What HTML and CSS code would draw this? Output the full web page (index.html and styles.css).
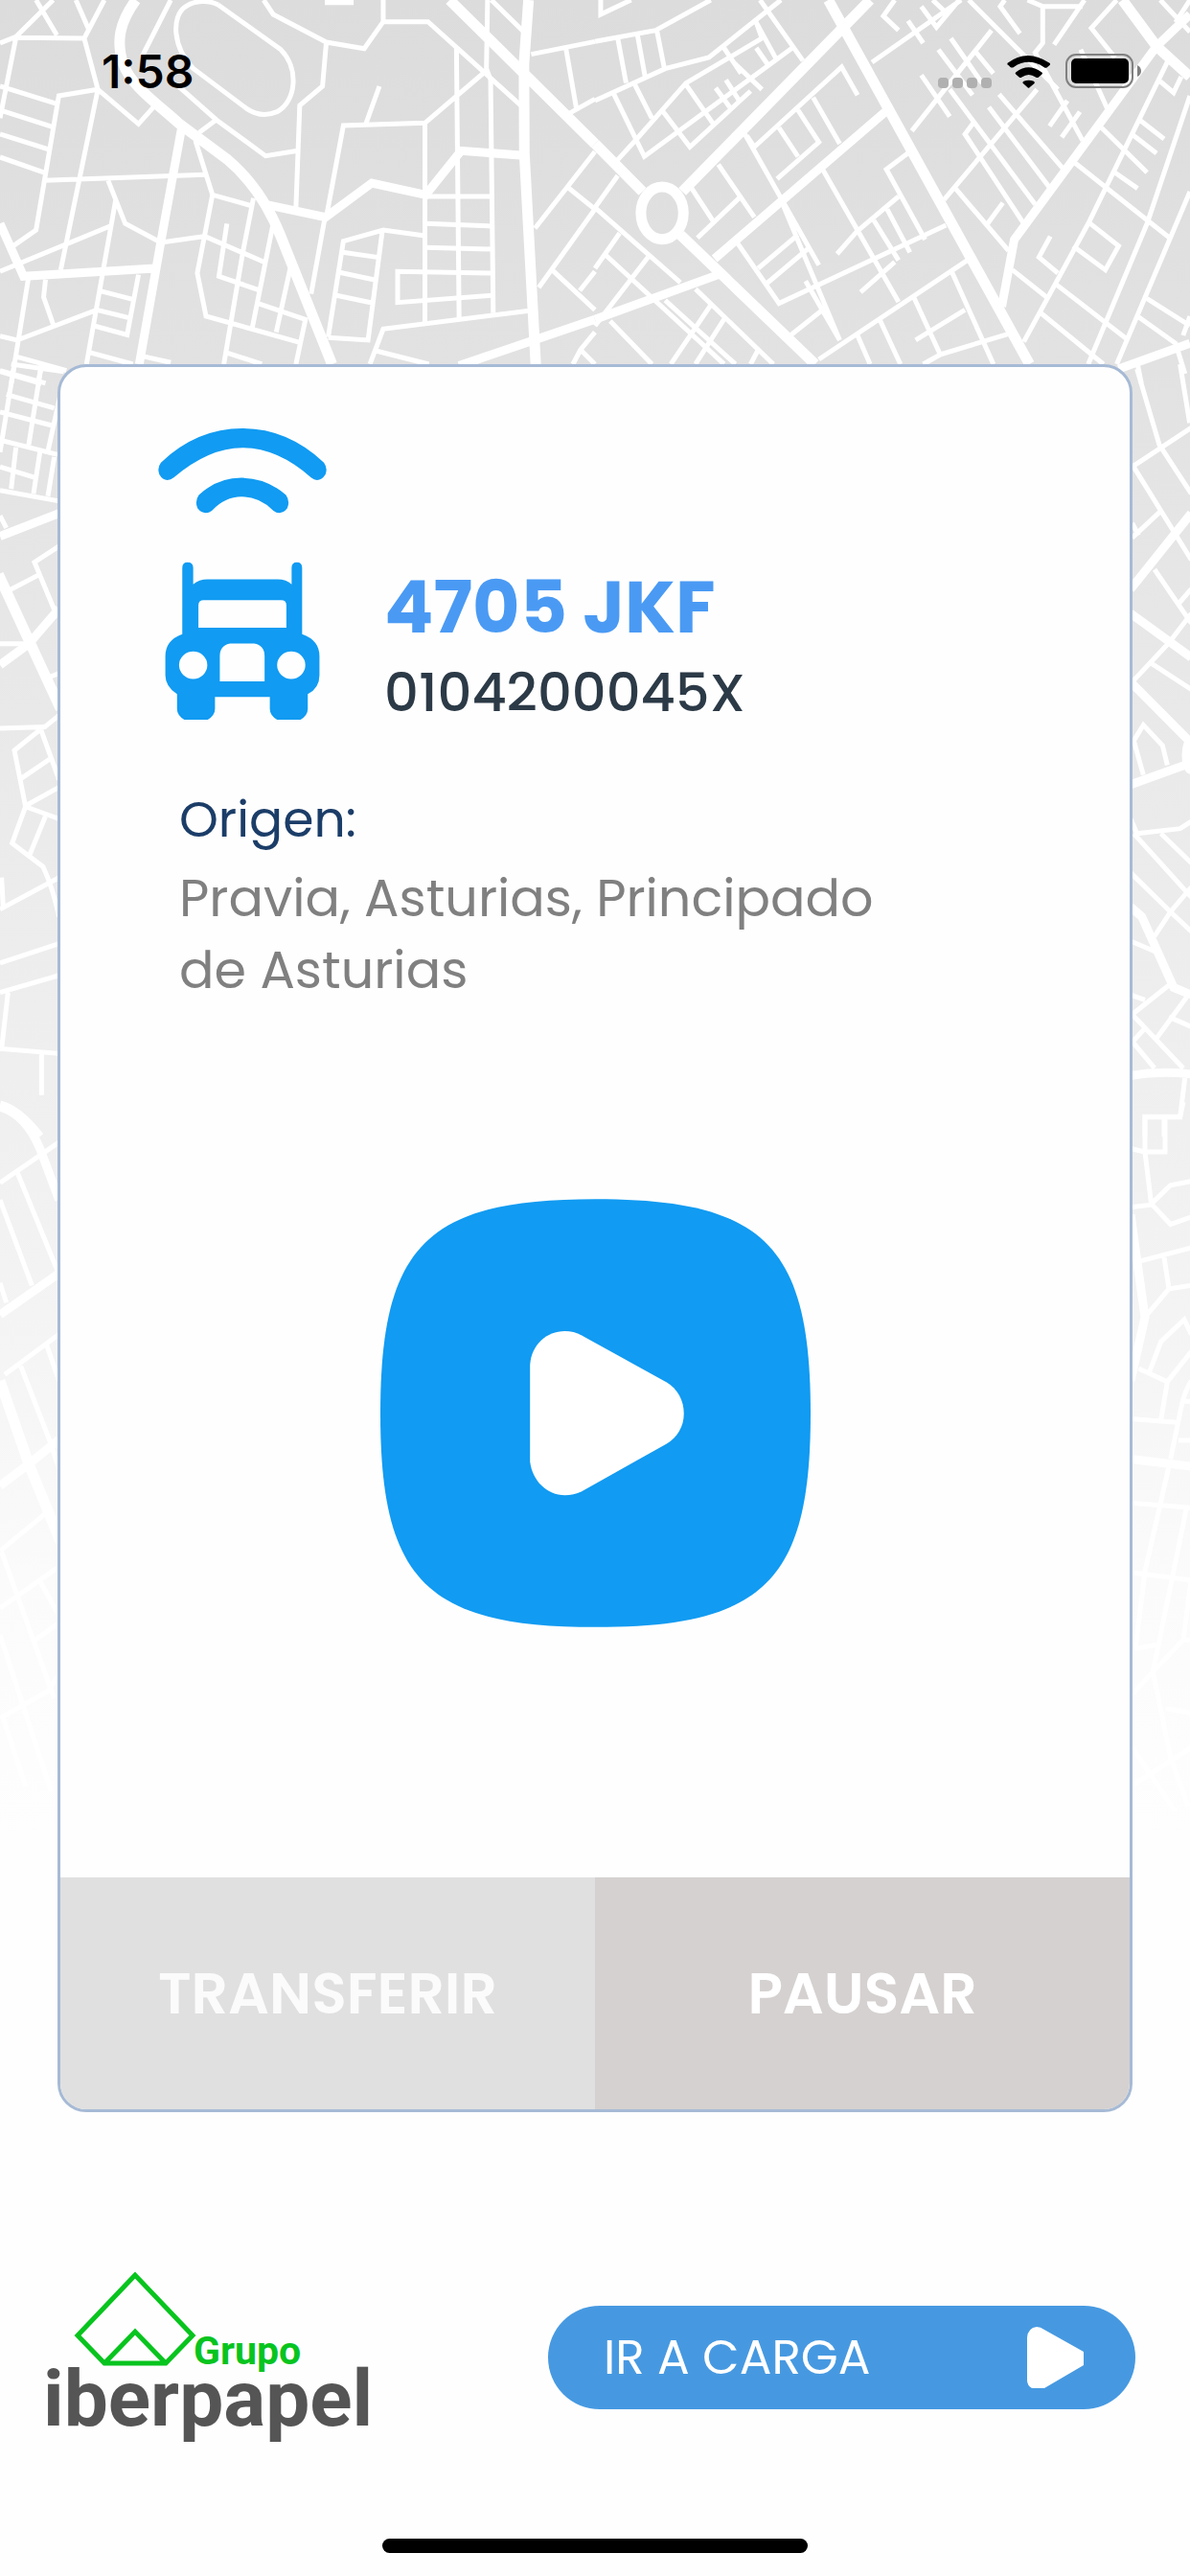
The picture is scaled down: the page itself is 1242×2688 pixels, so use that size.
FILE: index.html
```html
<!DOCTYPE html>
<html lang="es">
<head>
    <meta charset="UTF-8">
    <meta name="viewport" content="width=device-width, initial-scale=1">
    <title>Iberpapel</title>
    <link rel="stylesheet" href="styles.css">
</head>
<body>
    <!-- Street map behind the card -->
    <svg class="map" viewBox="0 0 1242 2000" preserveAspectRatio="xMidYMin slice" aria-hidden="true">
        <g transform="scale(.396 .3333)">
            <path class="road-main" d="M358 0C315 70 305 130 325 200C345 270 420 330 470 385L600 500C680 580 720 680 740 740L875 1140M1185 0L1568 450M1393 0L1381 200L1382 480L1412 1140"/>
            <path class="road-mid" d="M0 700L62 865L408 840M478 405L425 750L367 1140M700 640L858 680L980 573L1122 610L1215 472L1380 487M1210 1145L1568 1000M856 2H932"/>
            <path class="road" d="M95 0L150 110M140 0L42 115L0 135M200 0L233 90M275 0L222 120L45 118M42 118L0 370M222 120L258 280L365 388L405 335M258 280L155 300L95 720L35 770M0 270L150 325M0 345L140 398M0 420L128 468M0 492L115 540M258 280L160 845M118 565L540 547M450 0L375 175M470 270L570 375L700 488L785 472M570 375L525 415"/>
            <path class="road" d="M575 15L740 155C790 215 780 320 730 350C700 365 675 360 650 340L510 215C455 150 450 50 490 20C515 0 550 0 575 15M695 0L720 45L860 132L960 152L1010 68L1128 68L1382 340M1010 0V68M860 132L850 270L790 330L780 650M1000 270L965 385M860 680L905 393L1120 385L1275 228M1120 385V1010M1203 150L1210 1000M1285 0L1282 215L1293 250L1300 980M1295 0L1385 105M1400 170L1568 130M1492 155L1520 345M1500 355L1568 310"/>
            <path class="road" d="M1122 615H1295M1122 700L1295 708M1122 775L1295 780M1295 855L1048 850V947L1295 925M975 1140L1010 1030L1400 972M865 1055L905 755L1010 720L1120 738M1008 720L970 1065L865 1057M903 790L998 806M895 853L990 877M887 925L980 948M990 1098L1130 1140M515 440L560 610L665 645M560 610L520 855L543 990L790 1072M668 620L640 790L590 1140M420 760L540 740L695 820M598 700L577 865L680 907M720 700L665 1025M765 840L728 1040M680 950L805 1000L780 1140M855 690L820 920M600 1105L690 1140"/>
            <path class="road" d="M0 850L290 708M285 565L330 700L420 757M305 625L228 1140M75 870L30 1200M120 875L115 930L140 1015M0 1052L45 1065L255 970L340 995M262 910L350 937M365 860L335 1048L248 1020M235 1103L350 1140M45 1117L175 1160M110 1140L100 1200M0 1160L120 1200M375 1115L450 1135M1568 475L1410 715M1495 585L1568 655L1420 900M1455 845L1568 970M1568 850L1528 910M1568 1040L1530 1095L1510 1140M1530 1095L1568 1140"/>
        </g>
        <g transform="translate(621 0) scale(.396 .3333)">
            <path class="road-main" d="M0 450L125 600M225 735L580 1140M615 0L1145 1140M725 0L230 600M1390 0L1480 145L1568 240"/>
            <ellipse class="road-main" cx="177" cy="667" rx="56" ry="82"/>
            <path class="road-mid" d="M0 1000L325 860M315 810L770 345M1568 45L1480 145L1105 750L1072 960M1380 1155L1568 1075"/>
            <path class="road" d="M0 130L160 95L305 0M15 0V45L95 0M60 120L82 260M112 110L132 240M163 95L183 215M490 0L300 180L185 215L0 315M50 295L130 490L520 150M105 265L150 370M60 500L110 435L240 260L440 120L425 70L480 190M435 0L548 190M340 150L385 230M365 195L440 280M240 265L310 385M180 350L250 460L410 285M345 250L380 315M318 275L355 335M425 150L460 210"/>
            <path class="road" d="M400 425L420 460L650 210L692 298M575 305L645 450M535 345L590 445L480 560M485 400L535 490M395 420L590 830M325 515L420 680M255 590L310 690M270 745L380 620M60 550L0 650L225 885M375 760L485 950L925 705M430 840L535 735M455 885L560 780M495 640L645 1065M600 530L800 945M800 615L690 725M770 655L830 790M735 690L800 815M830 475L768 530L870 750M555 880L645 1065M638 795L690 725M700 915L790 820M515 1050L600 970M590 1125L985 812M940 850L1050 1140M840 930L910 1110L1090 1045M690 1045L725 1140M750 1000L805 1140M845 1065L975 970M865 1140L910 1110"/>
            <path class="road" d="M65 730L0 840M25 795L340 1140M140 805L0 1020M185 940L370 1140M265 905L470 1140M40 1005L150 1140M305 955L200 1140M345 990L265 1140M430 1095L410 1140"/>
            <path class="road" d="M790 0L760 50L800 95M965 0L730 195M825 65L865 135M860 20L900 85L960 0M890 0L930 45M985 0L1220 280M1080 0L1068 20L1120 105M1045 95L835 410M905 155L995 298M938 120L1020 260M860 235L935 365M1005 165L1050 230M1140 0L1180 20V135L1160 165L1285 440M1180 20H1285M1290 0L1210 140M1375 0L1308 88L1370 180M1280 155L1350 340M1165 280L920 625M935 280L1160 640M1065 295L1235 530M1038 335L1200 590M1000 380L975 420L1130 700M950 590L1090 785M1075 635L1035 700M1245 315L1198 395M1278 350L1230 430"/>
            <path class="road" d="M1490 0L1568 100M1568 0L1530 70M1510 190L1300 700L1130 1070M1490 255L1525 290L1545 240M1435 375L1500 435M1415 420L1480 480M1335 400L1455 540M1370 540L1430 590M1265 510L1520 750M1568 300L1455 700L1300 1140M1568 600L1375 1140M1300 695L1380 770L1345 845L1260 770M1200 740L1170 805L1220 855M1100 845L1190 930M1215 890L1400 1060M1170 975L1340 1140M1455 935L1568 1020M1430 990L1530 1075L1555 1170M1568 990L1550 1050M1430 1140L1440 1200"/>
        </g>
        <g transform="translate(0 380) scale(.3333 .5102)">
            <path class="road-main" d="M-5 430L190 705"/>
            <path class="road-mid" d="M0 352L185 305M0 615L90 572L185 500M0 1515Q60 1525 125 1580"/>
            <path class="road" d="M45 0L0 180M130 0L90 165M0 15L130 40M35 0L200 15M20 62L170 90M0 98L160 125M0 155L180 185M190 60L150 178M50 170L35 255M125 180L105 265M170 190L150 270M0 210L110 232M0 258L185 280M0 310L20 335M185 372L108 405L175 510M30 462L130 428M0 572H90M155 640L185 632M0 745L140 742L185 718M125 742L185 850M140 740L45 790L80 905L185 930M65 848L155 808M75 905L185 865M80 905L38 980L135 1028Q165 1070 185 1130M142 925L92 1005M0 1115L185 1050M5 1050L10 1110M0 1225L185 1185M0 1285L185 1250M25 1285L5 1400M0 1400L185 1410M130 1410V1495"/>
        </g>
        <g transform="translate(0 1150) scale(.3333 .5102)">
            <path class="road-main" d="M0 570L90 740L190 900"/>
            <path class="road-mid" d="M0 10Q80 25 125 95L185 200M0 435L185 350M0 785L95 738L185 690"/>
            <path class="road" d="M0 165L185 82M55 145L180 345M0 200L100 375M0 370L20 410M15 557L185 475M65 540L160 700L185 750M145 495L185 570M0 918L145 840M5 920L170 1220M0 1035L185 950M0 1090L70 1230L160 1410M125 980L185 1050M100 1105L185 1065M0 1260L150 1205L185 1170M10 1260L80 1400"/>
        </g>
        <g transform="translate(1160 380) scale(.3333 .5102)">
            <path class="road-mid" d="M60 460L250 305M60 510L250 600M60 650L250 775M60 860L230 820M60 1110L95 1130L195 1275L250 1290M60 1455Q150 1445 250 1452"/>
            <ellipse class="road-mid" cx="250" cy="800" rx="16" ry="30"/>
            <path class="road" d="M80 10L150 165L250 265M215 0L245 120M65 210L250 130M65 205L250 400M65 355L155 300M65 325L85 350M135 420L250 530M210 490L250 460M65 650L180 570L250 510M120 610L250 665M100 840L70 770L100 738L160 780L175 820M60 930L80 960L215 950L250 935M70 960L250 1090M155 960L250 1020M60 1040L185 1120L250 1160M250 1070L185 1120L135 1170M60 1180L150 1205M60 1290L105 1300M65 1330L180 1270M65 1330L225 1440M60 1390L110 1355M65 1385L135 1440M140 1380L235 1295M180 1335L250 1355M230 1460L215 1540H105V1580M165 1540V1580"/>
        </g>
        <g transform="translate(1160 1150) scale(.3333 .5102)">
            <path class="road-mid" d="M60 230L105 440L60 570M60 730L250 745"/>
            <path class="road" d="M225 0L215 30H105V102H168V30M60 95L105 102L125 210L60 215M125 208L185 170L250 162M125 208L185 250L250 235M90 325L250 298M165 318L180 382L250 375M105 440L180 382M120 550L155 490L228 445L250 475M85 545L175 572L250 510M175 572L155 650M60 648L205 655M250 570Q230 590 220 620L185 730M230 612H250M210 692H250M60 820L250 830M60 962L250 978M180 745L105 960L75 1120M235 830L130 1165L185 1340L240 1440M75 1118L140 1110M250 975L225 1100L130 1165L60 1215M225 1100H250M170 1240L250 1250M60 1400L250 1320M65 1320L200 1450"/>
        </g>
    </svg>

    <header class="status-bar">
        <time class="status-time">1:58</time>
        <div class="status-icons">
            <span class="cell-dots"><i></i><i></i><i></i><i></i></span>
            <svg class="wifi" viewBox="0 0 117 103" preserveAspectRatio="none" aria-hidden="true">
                <path d="M7 33Q2 31 4 26Q55-20 113 26Q117 29 112 34L106 40Q102 42 98 38Q58 8 20 38Q16 42 11 38ZM26 61Q22 58 26 54Q58 24 92 54Q97 57 92 62L84 70Q80 72 77 69Q59 54 41 69Q37 72 34 69ZM45 89Q41 86 46 82Q59 75 72 82Q76 86 73 89L61 101Q59 104 56 101Z"/>
            </svg>
            <svg class="battery" viewBox="0 0 80 36" aria-hidden="true">
                <rect class="battery-body" x="1" y="1" width="69" height="34" rx="10"/>
                <rect x="6" y="5" width="60" height="26" rx="5"/>
                <path class="battery-nub" d="M75 12q4 2 4 6t-4 6z"/>
            </svg>
        </div>
    </header>

    <main class="trip-card">
        <section class="trip-info">
            <div class="vehicle">
                <svg class="vehicle-icon" viewBox="59 81 418 913" preserveAspectRatio="none" aria-hidden="true">
                    <path d="M66 188Q155 81 268 81Q380 81 470 188Q480 205 474 225Q465 243 453 243Q446 243 438 235Q355 142 268 142Q185 142 98 235Q90 243 82 243Q70 243 62 225Q56 205 66 188ZM160 290Q205 236 266 236Q328 236 376 290Q387 310 379 332Q370 346 359 346Q352 346 345 339Q310 295 266 295Q225 295 192 339Q185 346 177 346Q166 346 157 332Q149 310 160 290Z"/>
                    <path fill-rule="evenodd" d="M119 518Q119 501 132 501Q146 501 146 518V570Q160 554 182 554H355Q377 554 390 570V518Q390 501 403 501Q416 501 416 518V726Q459 745 459 795V855Q459 895 430 914V960Q430 980 412 994H354Q336 980 336 960V923H200V960Q200 980 182 994H124Q106 980 106 960V914Q77 890 77 855V795Q77 745 119 726ZM172 619Q159 619 159 635V706H377V635Q377 619 364 619ZM238 755Q212 760 212 795V874H323V795Q323 760 297 755ZM146 780A35 43 0 1 0 146 866A35 43 0 1 0 146 780ZM389 780A35 43 0 1 0 389 866A35 43 0 1 0 389 780Z"/>
                </svg>
                <div class="vehicle-text">
                    <h1 class="plate">4705 JKF</h1>
                    <p class="code">0104200045X</p>
                </div>
            </div>
            <div class="origin">
                <h2 class="origin-label">Origen:</h2>
                <p class="origin-place">Pravia, Asturias, Principado de Asturias</p>
            </div>
        </section>

        <button type="button" class="play-btn" aria-label="Iniciar">
            <svg class="play-icon" viewBox="49 63 1348 1341" aria-hidden="true">
                <path class="play-shape" d="M723 63C1251 63 1397 208 1397 735C1397 1259 1251 1404 723 1404C195 1404 49 1259 49 735C49 208 195 63 723 63Z"/>
                <path class="play-arrow" d="M518 582C522 520 570 477 627 477Q655 477 680 490L945 637C980 657 1000 695 1000 735C1000 775 980 810 945 830L680 979Q655 991 627 991C570 991 525 945 518 886Z"/>
            </svg>
        </button>

        <div class="card-actions">
            <button type="button" class="action-btn transfer">TRANSFERIR</button>
            <button type="button" class="action-btn pause">PAUSAR</button>
        </div>
    </main>

    <footer class="footer">
        <svg class="logo" viewBox="0 0 336 180" role="img" aria-label="Grupo iberpapel">
            <path class="logo-mark" d="M93 4L33 67L61 96H125L153 67ZM61 96L93 63L125 96"/>
            <text class="logo-group" x="154" y="97">Grupo</text>
            <text class="logo-name" x="-3" y="161">iberpapel</text>
        </svg>
        <a href="#carga" class="load-btn">
            <span>IR A CARGA</span>
            <svg class="load-arrow" viewBox="0 0 59 64" aria-hidden="true">
                <path d="M0 11Q1 1 10 0Q14 0 18 3L59 26V40L18 64H5Q0 61 0 56Z"/>
            </svg>
        </a>
    </footer>

    <div class="home-indicator"></div>
</body>
</html>
```

FILE: styles.css
```css
:root {
    --primary-color: #119bf2;
    --plate-color: #4a9af4;
    --button-color: #4699e1;
    --border-color: #a6bad5;
    --background-color: #fefefe;
}

* {
    margin: 0;
    padding: 0;
    box-sizing: border-box;
}

body {
    position: relative;
    display: flex;
    flex-direction: column;
    min-height: 100vh;
    font-family: Poppins, Inter, sans-serif;
    background-color: var(--background-color);
}

button {
    border: none;
    font-family: inherit;
    cursor: pointer;
}

/* Map */
.map {
    position: absolute;
    top: 0;
    left: 0;
    width: 100%;
    height: 2000px;
    z-index: -1;
    background: linear-gradient(#dcdcdc 0, #e2e2e2 380px, #eaeaea 800px, #f0f0f0 1180px, #f5f5f5 1420px, #fbfbfb 1650px, #fefefe 1920px);
}

.road,
.road-mid,
.road-main {
    fill: none;
    stroke: #fff;
    stroke-width: 5px;
    vector-effect: non-scaling-stroke;
}

.road-mid {
    stroke-width: 9px;
}

.road-main {
    stroke-width: 11px;
}

/* Status bar */
.status-bar {
    display: flex;
    justify-content: space-between;
    align-items: center;
    height: 148px;
    padding: 0 50px 0 106px;
}

.status-time {
    font-family: Inter, sans-serif;
    font-size: 48px;
    font-weight: 600;
}

.status-icons {
    display: flex;
    align-items: center;
    gap: 15px;
}

.cell-dots {
    display: flex;
    align-self: flex-end;
    gap: 4px;
}

.cell-dots i {
    width: 11px;
    height: 11px;
    border-radius: 4px;
    background-color: #b0b0b0;
}

.wifi {
    width: 47px;
    height: 35px;
}

.battery {
    width: 80px;
    height: 36px;
}

.battery-body {
    fill: none;
    stroke: #808080;
    stroke-width: 2px;
}

.battery-nub {
    fill: #808080;
}

/* Card */
.trip-card {
    display: flex;
    flex-direction: column;
    flex: 1;
    margin: 232px 60px 0;
    border: 3px solid var(--border-color);
    border-radius: 30px;
    background-color: var(--background-color);
    overflow: hidden;
}

.trip-info {
    padding: 64px 102px 0;
}

.vehicle {
    display: flex;
    align-items: flex-end;
    gap: 60px;
}

.vehicle-icon {
    width: 176px;
    height: 304px;
    fill: var(--primary-color);
}

.plate {
    margin-bottom: 16px;
    font-size: 76px;
    line-height: 90px;
    font-weight: 700;
    color: var(--plate-color);
}

.code {
    font-size: 56px;
    line-height: 56px;
    font-weight: 500;
    color: #2c3a47;
}

.origin {
    padding: 66px 120px 0 22px;
}

.origin-label {
    font-size: 52px;
    line-height: 75px;
    font-weight: 400;
    color: #1b3d68;
}

.origin-place {
    margin-top: 8px;
    font-size: 54px;
    line-height: 75px;
    color: #808080;
}

.play-btn {
    align-self: center;
    margin: auto;
    padding-bottom: 60px;
    background: none;
}

.play-icon {
    display: block;
    width: 449px;
    height: 447px;
}

.play-shape {
    fill: var(--primary-color);
}

.play-arrow {
    fill: #fff;
}

.card-actions {
    display: grid;
    grid-template-columns: 1fr 1fr;
}

.action-btn {
    height: 242px;
    font-size: 60px;
    font-weight: 600;
    color: #fff;
}

.transfer {
    background-color: #e0e0e0;
    color: #fbfbfb;
}

.pause {
    background-color: #d5d1d0;
}

/* Footer */
.footer {
    display: flex;
    justify-content: space-between;
    align-items: center;
    padding: 166px 57px 0 48px;
}

.logo {
    width: 336px;
    height: 180px;
    overflow: visible;
}

.logo-mark {
    fill: none;
    stroke: #08c41e;
    stroke-width: 5px;
}

.logo-group,
.logo-name {
    font-family: Roboto, sans-serif;
    font-weight: 700;
}

.logo-group {
    font-size: 41px;
    fill: #08c41e;
}

.logo-name {
    font-size: 82px;
    fill: #555;
}

.load-btn {
    display: flex;
    justify-content: space-between;
    align-items: center;
    width: 55%;
    max-width: 613px;
    height: 108px;
    padding: 0 54px 0 58px;
    border-radius: 54px;
    background-color: var(--button-color);
    color: #fff;
    font-size: 50px;
    text-decoration: none;
}

.load-arrow {
    width: 59px;
    height: 64px;
    fill: #fff;
}

.home-indicator {
    align-self: center;
    width: 444px;
    height: 15px;
    margin: 99px 0 24px;
    border-radius: 8px;
    background-color: #000;
}
```
